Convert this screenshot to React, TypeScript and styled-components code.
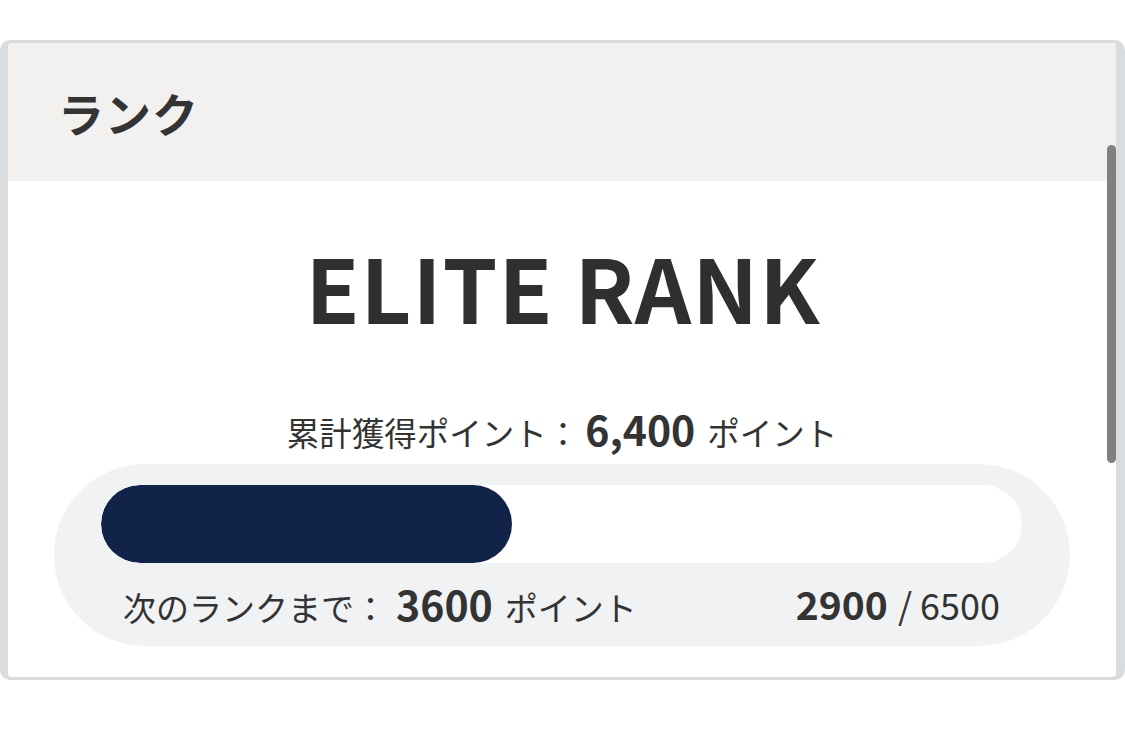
import React from 'react'
import styled, { createGlobalStyle } from 'styled-components'

const GlobalStyle = createGlobalStyle`
  html, body {
    margin: 0;
    padding: 0;
    background: #ffffff;
  }
  body {
    font-family: 'Noto Sans CJK JP', 'Noto Sans', sans-serif;
    color: #333333;
  }
`

const Page = styled.div`
  padding-top: 40px;
  height: 741px;
  box-sizing: border-box;
`

const Frame = styled.div`
  background: #dadde0;
  border-radius: 10px;
  padding: 3px 9px 3px 8px;
`

const Card = styled.div`
  position: relative;
  background: #ffffff;
  border-radius: 4px;
  overflow: hidden;
  height: 634px;
`

const Header = styled.div`
  display: flex;
  align-items: center;
  height: 138px;
  padding-left: 50px;
  background: #f2f1f0;
  font-size: 46px;
  font-weight: 700;
  color: #333333;
  letter-spacing: 1px;
`

const Body = styled.div`
  display: flex;
  flex-direction: column;
  align-items: center;
  padding: 0 46px;
`

const RankName = styled.div`
  margin-top: 52px;
  padding-left: 2px;
  font-size: 88px;
  font-weight: 700;
  line-height: 1.2;
  letter-spacing: 1px;
  color: #2f2f2f;
`

const TotalLine = styled.div`
  margin-top: 63px;
  font-size: 32.5px;
  line-height: 1.3;
  display: flex;
  align-items: baseline;
`

const Strong = styled.span<{ size?: number }>`
  font-size: ${({ size }) => size ?? 41}px;
  font-weight: 700;
  margin: 0 12px 0 6px;
`

const Pill = styled.div`
  align-self: stretch;
  display: flex;
  flex-direction: column;
  margin-top: 9px;
  height: 182px;
  box-sizing: border-box;
  padding: 21px 48px 0 47px;
  background: #f1f2f4;
  border-radius: 91px;
`

const Track = styled.div`
  height: 78px;
  flex: none;
  border-radius: 39px;
  background: #ffffff;
  overflow: hidden;
`

const Fill = styled.div`
  height: 100%;
  border-radius: 39px;
  background: #12234a;
`

const Footer = styled.div`
  flex: 1;
  display: flex;
  justify-content: space-between;
  align-items: center;
  padding: 0 22px 3px 22px;
`

const Label = styled.div<{ size?: number }>`
  display: flex;
  align-items: baseline;
  font-size: ${({ size }) => size ?? 33}px;
`

const Scrollbar = styled.div`
  position: absolute;
  top: 102px;
  right: 0;
  width: 9px;
  height: 318px;
  border-radius: 5px;
  background: #808080;
`

export default function App() {
  const current = 2900
  const goal = 6500
  const pct = (current / goal) * 100
  return (
    <Page>
      <GlobalStyle />
      <Frame>
        <Card>
          <Header>ランク</Header>
          <Body>
            <RankName>ELITE RANK</RankName>
            <TotalLine>
              累計獲得ポイント：<Strong>6,400</Strong>ポイント
            </TotalLine>
            <Pill>
              <Track>
                <Fill style={{ width: `${pct}%` }} />
              </Track>
              <Footer>
                <Label>
                  次のランクまで：<Strong style={{ marginLeft: '9px' }}>3600</Strong>ポイント
                </Label>
                <Label size={36}>
                  <Strong size={39} style={{ margin: '0 10px 0 0' }}>{current}</Strong>/ {goal}
                </Label>
              </Footer>
            </Pill>
          </Body>
          <Scrollbar />
        </Card>
      </Frame>
    </Page>
  )
}
